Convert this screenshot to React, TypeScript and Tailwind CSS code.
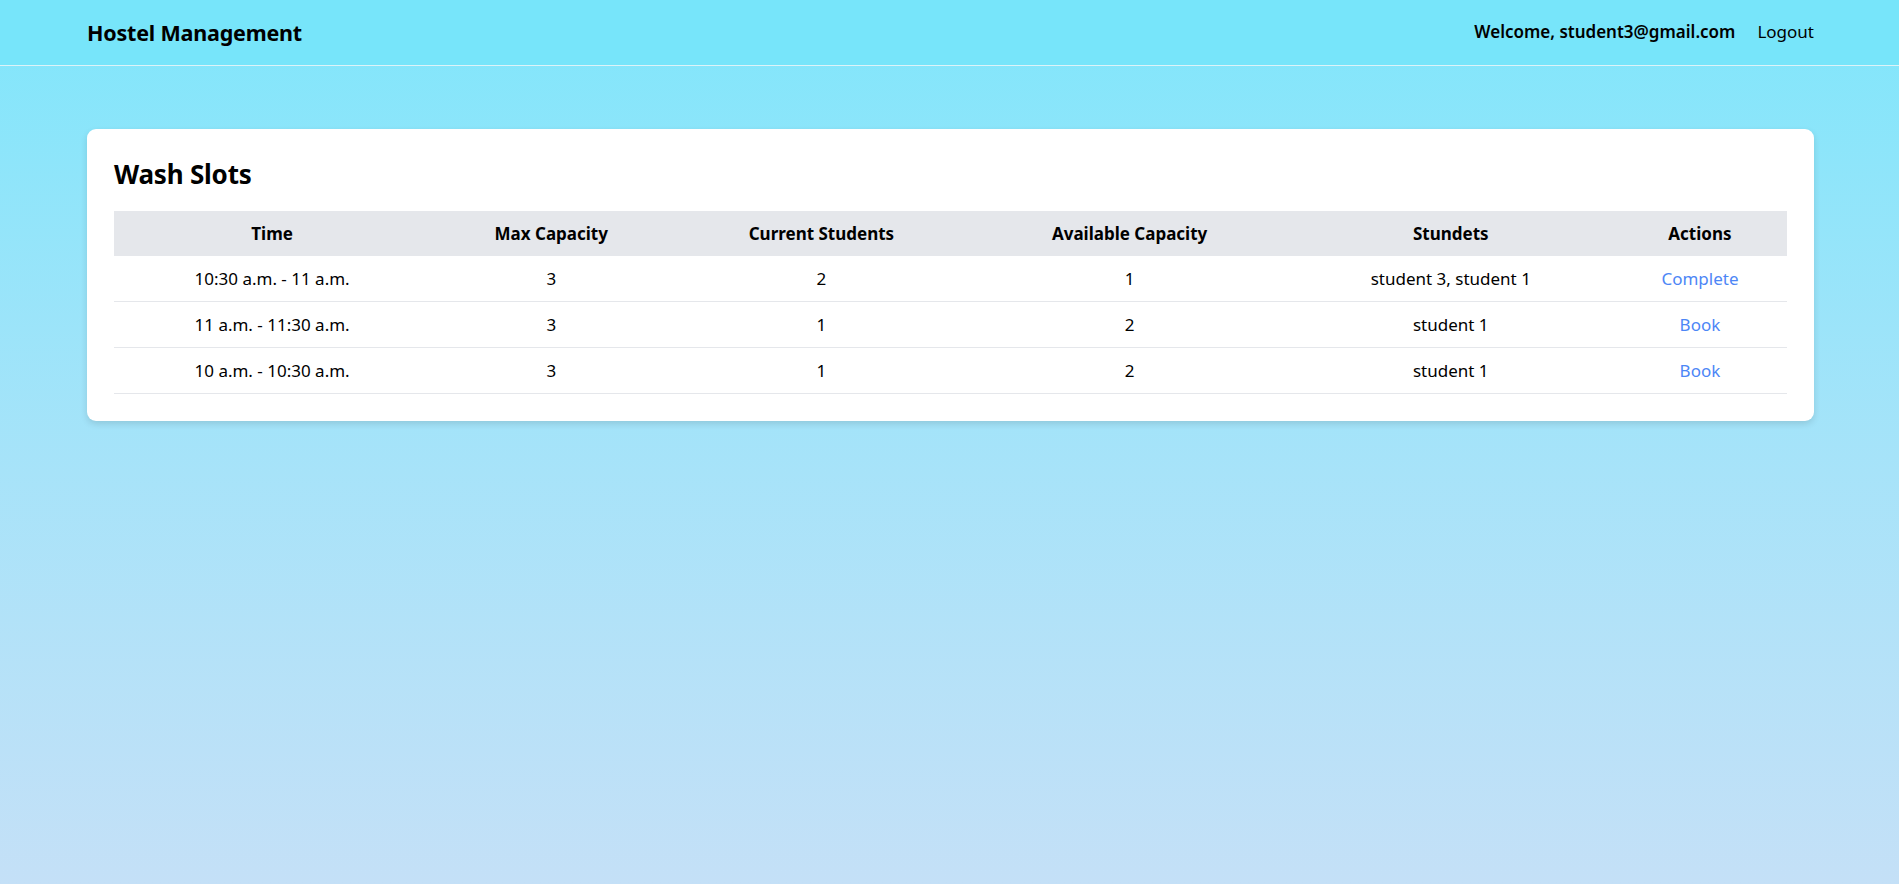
import { useState } from 'react';

interface Slot {
  id: number;
  time: string;
  max: number;
  current: number;
  students: string[];
  booked: boolean;
}

const SLOTS: Slot[] = [
  { id: 1, time: '10:30 a.m. - 11 a.m.', max: 3, current: 2, students: ['student 3', 'student 1'], booked: true },
  { id: 2, time: '11 a.m. - 11:30 a.m.', max: 3, current: 1, students: ['student 1'], booked: false },
  { id: 3, time: '10 a.m. - 10:30 a.m.', max: 3, current: 1, students: ['student 1'], booked: false },
];

const COLUMNS = ['Time', 'Max Capacity', 'Current Students', 'Available Capacity', 'Stundets', 'Actions'];

export default function App() {
  const [slots] = useState<Slot[]>(SLOTS);

  return (
    <div
      className="min-h-[884px] bg-gradient-to-b from-[#7fe6fb] to-[#c4e0f7] text-black"
      style={{ fontFamily: '"Noto Sans", "Open Sans", Arial, sans-serif' }}
    >
      <header className="h-[66px] bg-[#77e5fa] border-b border-[#dcf3f8] flex items-center justify-between pl-[87px] pr-[85px]">
        <h1 className="text-[21.5px] font-bold leading-[31px] tracking-[-0.2px] -mt-[1px]">Hostel Management</h1>
        <div className="flex items-center gap-[22px] text-[17px] -mt-[1px]">
          <span className="font-semibold">Welcome, student3@gmail.com</span>
          <button className="font-normal">Logout</button>
        </div>
      </header>

      <main className="pl-[87px] pr-[85px] pt-[63px]">
        <div className="bg-white rounded-[9px] shadow-[0_3px_7px_rgba(0,0,0,0.12)] p-[27px]">
          <h2 className="text-[26px] font-bold leading-[36px] mb-[19px] tracking-[-0.2px]">Wash Slots</h2>
          <table className="w-full table-fixed border-collapse text-[17px]">
            <colgroup>
              <col className="w-[316px]" />
              <col className="w-[242px]" />
              <col className="w-[298px]" />
              <col className="w-[318px]" />
              <col className="w-[324px]" />
              <col className="w-[174px]" />
            </colgroup>
            <thead>
              <tr className="bg-[#e5e7eb]">
                {COLUMNS.map(col => (
                  <th key={col} className="py-[9px] leading-[27px] font-bold text-center">
                    {col}
                  </th>
                ))}
              </tr>
            </thead>
            <tbody>
              {slots.map(slot => (
                <tr key={slot.id} className="border-b border-[#e5e7eb]">
                  <td className="py-[9px] leading-[27px] text-center">{slot.time}</td>
                  <td className="py-[9px] leading-[27px] text-center">{slot.max}</td>
                  <td className="py-[9px] leading-[27px] text-center">{slot.current}</td>
                  <td className="py-[9px] leading-[27px] text-center">{slot.max - slot.current}</td>
                  <td className="py-[9px] leading-[27px] text-center">{slot.students.join(', ')}</td>
                  <td className="py-[9px] leading-[27px] text-center">
                    <button className="text-[#4d86f6]">{slot.booked ? 'Complete' : 'Book'}</button>
                  </td>
                </tr>
              ))}
            </tbody>
          </table>
        </div>
      </main>
    </div>
  );
}
